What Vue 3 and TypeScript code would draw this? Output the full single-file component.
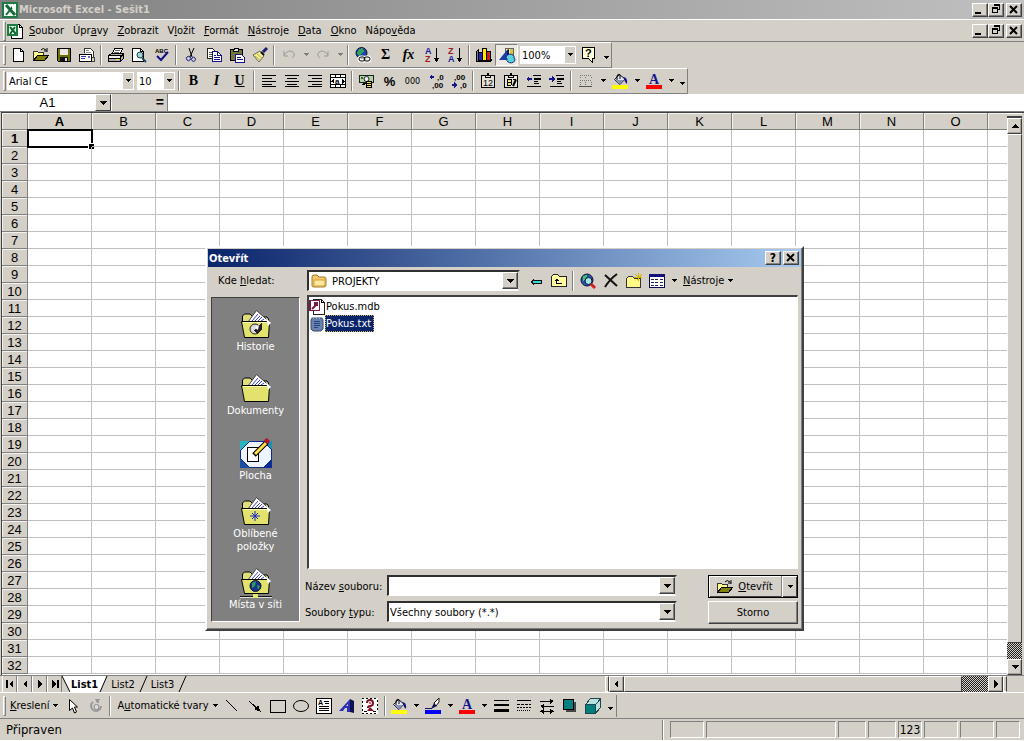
<script setup lang="ts">
import { h, ref } from 'vue'

interface Shape { d?: string; f?: string; s?: string; w?: number; t?: string; x?: number; y?: number; z?: number; b?: boolean; o?: boolean }
const K = '#000'
const p = (d: string, f = 'none', s = 'none', w = 1): Shape => ({ d, f, s, w })
const l = (d: string, s = K, w = 1): Shape => ({ d, f: 'none', s, w })
const t = (text: string, x: number, y: number, z: number, f = K, b = true): Shape => ({ t: text, x, y, z, f, b })
const soft = (s: Shape): Shape => ({ ...s, o: true })

const bucket: Shape[] = [
  soft(p('M7.5 1.5L13 6L8 11.5L2.5 6.5z', '#dfe6f5', '#111')), soft(p('M4 7H12L8 11z', '#8a93b5')),
  soft(l('M5 7V3Q6 0 8 2V6')), soft(p('M11 4Q16 4 15 11Q13 10 12 6z', '#16167e')),
]
const folderBig: Shape[] = [
  soft(p('M2.5 15V8L4.5 6H10L13 9H27L28.5 11V15z', '#dede7a', K)),
  soft(p('M8 14L16.5 2.5L29 13.5z', '#fff', '#444')),
  soft(l('M12 13L18 6M15 13L20 8M18 13L22 9M21 13L24 11', '#4040d0')),
  soft(p('M1.5 13.500H29.500L28.500 29.500H4.500z', '#e2e26c', K)),
  soft(l('M3 14.500H28', '#ffffb4')), soft(p('M26 10L31 15L28 18z', '#fff')),
]
const icons: Record<string, Shape[]> = {
  excel: [p('M0 0H16V16H0z', '#1f7a46'), p('M2 2H14V14H2z', '#f1fff4'), soft(l('M4 3L13 13', '#16683a', 3)), soft(l('M12 3L4 13', '#16683a', 2)), p('M10 3H13V6H10z', '#fff')],
  book: [p('M4.5 1.5H12.5L15.5 4.5V15.5H4.5z', '#fff', K), l('M12.5 1.5V4.5H15.5'), p('M0 1H11V13H0z', '#1c7d3f'), p('M2 3H9V11H2z', '#efffef'), soft(l('M3 4L9 11M8 4L3 11', '#0e6b30', 2))],
  new: [p('M3.5 1.5H10.5L13.5 4.5V14.5H3.5z', '#fff', K), l('M10.5 1.5V4.5H13.5')],
  open: [p('M.5 13.5V4.5H4.5L5.5 5.5H10.5V8.5', '#ffff94', '#333'), p('M.5 13.5L4.5 8.5H15.5L11.5 13.5z', '#808000', K), soft(l('M8 3Q10 0 13 3M14 1V5M14 4H11'))],
  save: [p('M1.5 1.5H14.5V14.5H2.5L1.5 13.5z', '#707000', K), p('M4 2H12V8H4z', '#e8e8e8'), p('M4 10H12V14H4z', '#111'), p('M9 11H11V14H9z', '#ddd')],
  mail: [p('M5.5 6V1.5H11.5L14.5 4.5V10', '#fff', '#333'), l('M7 3.5H10M7 5.5H12M7 7.5H12', '#888'), p('M.5 7.5H12.5V14.5H.5z', '#fff', K), l('M2 9.5H7M2 11.5H6', '#33a'), p('M9 9H11V11H9z', '#66c'), l('M13 10.5H15.5V14.5H13', '#444')],
  print: [p('M4.5 6.5L6.5 1.5H14.5L12.5 6.5z', '#fff', K), l('M7 3.5H12M6 5.5H11', '#666'), p('M.5 8.5L3.5 6.5H15.5V11.5L12.5 14.5H.5z', '#aaa', K), p('M1 9H12V11H1z', '#eee'), l('M1 11.5H12.5M12.5 8V14M1 8.5H12M13 9.5L15 7.5'), p('M8 12H11V13H8z', '#ff0')],
  preview: [p('M1.5 1.5H9.5L12.5 4.5V14.5H1.5z', '#fff', K), l('M9.5 1.5V4.5H12'), soft(p('M6 8A3 3 0 1 0 12 8A3 3 0 1 0 6 8', '#9ed4da', '#244')), soft(l('M11 11L15 15', '#124a60', 2))],
  spell: [t('ABC', 1, 6, 6), soft(l('M3 9L7 13L14 5', '#10108a', 2))],
  cut: [soft(l('M6 1L9 10M11 1L7 10', K)), soft(l('M4 13A2 2 0 1 0 7 10A2 2 0 0 0 4 13M9 11A2 2 0 1 0 12 11A2 2 0 0 0 9 11', '#16168c'))],
  copy: [p('M1.5 1.5H6.5L9.5 4.5V11.5H1.5z', '#fff', '#222'), l('M3 5.5H7M3 7.5H8M3 9.5H8', '#555'), p('M6.5 4.5H11.5L15.5 8.5V14.5H6.5z', '#fff', '#16168c'), l('M11.5 5V8.5H15M8 8.5H10M8 10.5H14M8 12.5H14', '#16168c')],
  paste: [p('M1.5 2.5H13.5V13.5H1.5z', '#75753a', K), p('M5.5 1.5H9.5V4.5H4.5z', '#ddd', K), p('M6.5 7.5H12.5L15.5 10.5V15.5H6.5z', '#fff', '#16168c'), l('M8 10.5H12M8 12.5H14', '#16168c')],
  brush: [soft(p('M1 8L8 4L12 9L7 15z', '#f4ee8e', '#666')), soft(l('M3 9L8 13M5 7L10 11', '#b9ae55')), soft(l('M9 5L12 8', '#111', 2)), soft(l('M11 5L15 1', '#1c1c70', 3))],
  undo: [soft(l('M3 9H7M3 9V4M3 8Q8 2 12 5Q15 8 11 11', '#999'))],
  redo: [soft(l('M13 9H9M13 9V4M13 8Q8 2 4 5Q1 8 5 11', '#999'))],
  link: [soft(p('M1 6A5 5 0 1 0 12 6A5 5 0 1 0 1 6', '#2045a8', '#112')), p('M4 2L8 1L9 5L6 7L5 10L2 6z', '#30a060'), soft(l('M4 12A2 2 0 0 1 6 10H8A2 2 0 0 1 8 14H6A2 2 0 0 1 4 12M9 12A2 2 0 0 1 11 10H13A2 2 0 0 1 13 14H11A2 2 0 0 1 9 12', '#fff', 3)), soft(l('M4 12A2 2 0 0 1 6 10H8A2 2 0 0 1 8 14H6A2 2 0 0 1 4 12M9 12A2 2 0 0 1 11 10H13A2 2 0 0 1 13 14H11A2 2 0 0 1 9 12'))],
  az: [t('A', 1, 7, 9, '#1a1a90'), t('Z', 1, 15, 9, '#a01828'), l('M12.5 1V14'), p('M10 11H15L13 15H12z', K)],
  za: [t('Z', 1, 7, 9, '#a01828'), t('A', 1, 15, 9, '#1a1a90'), l('M12.5 1V14'), p('M10 11H15L13 15H12z', K)],
  chart: [p('M.5 4.5L2.5 2.5V12.5H15.5L14.5 14.5H.5z', '#777', K), p('M2.5 5.5H6.5V13.5H2.5z', '#2222c0', K), p('M6.5 1.5H10.5V13.5H6.5z', '#ffe800', K), p('M10.5 4.5H14.5V13.5H10.5z', '#c82020', K)],
  drawing: [p('M6.5 1.5H14.5V10.5H6.5z', '#d6c640', '#665'), p('M7 2H11V10H7z', '#f4f0a0'), soft(p('M0 13L8 3V13z', '#1d3ca4')), soft(p('M8 3L10 2V12L8 13z', '#0c1c66')), soft(p('M8 12A4 3 0 1 0 15 11A4 3 0 1 0 8 12', '#53d6dc', '#227'))],
  help: [p('M1.5 .5H13.5V11.5H11.5V15.5L7.5 11.5H1.5z', '#ffffd8', K), t('?', 4, 10, 11)],
  left: [l('M1 2.5H15M1 5.5H11M1 8.5H15M1 11.5H11M1 13.5H15')],
  center: [l('M1 2.5H15M3 5.5H13M1 8.5H15M3 11.5H13M1 13.5H15')],
  right: [l('M1 2.5H15M5 5.5H15M1 8.5H15M5 11.5H15M1 13.5H15')],
  merge: [p('M.5 1.5H15.5V14.5H.5z', '#fff', K), l('M1 4.5H15M1 11.5H15M5.5 1V5M10.5 1V5M5.5 11V15M10.5 11V15M1 8.5H4M12 8.5H15'), p('M1 8L4 6V11zM15 8L12 6V11z', K), t('a', 5, 11, 8)],
  money: [p('M.5 2.5H14.5V9.5H.5z', '#b6d2a2', '#122'), soft(p('M5 6A2 2 0 1 0 10 6A2 2 0 1 0 5 6', '#eef', '#222')), p('M7.5 8.5H12.5V14.5H7.5z', '#f0e060', K), l('M8 10.5H12M8 12.5H12M3.5 10.5H7M3 11.5H6'), p('M2 4H4V6H2z', '#356a30')],
  incdec: [t(',0', 9, 7, 8), t(',00', 4, 15, 8), p('M1 4L4 1V3H6V5H4V7z', '#16168c')],
  decdec: [t(',00', 3, 7, 8), t(',0', 9, 15, 8), p('M6 12L3 9V11H1V13H3V15z', '#16168c')],
  cal: [p('M1.5 2.5H14.5V14.5H1.5z', '#e5e1d8', K), p('M5.5 4.5V2.5H7.5V.5H8.5V2.5H10.5V4.5z', '#ddd', K), t('12', 3, 13, 9, K, false)],
  calfx: [p('M1.5 2.5H14.5V14.5H1.5z', '#e5e1d8', K), p('M5.5 4.5V2.5H7.5V.5H8.5V2.5H10.5V4.5z', '#ddd', K), p('M4 6H8V12H4z', '#e9e36b'), l('M4 6.5H8M4 9.5H8M4 12.5H8M4.5 6V12M8.5 6V12M10 6.5H13'), soft(l('M13 6.5L10 13', K, 2))],
  outdent: [l('M7 2.5H15M1 13.5H15M8 10.5H13'), p('M8 5H15V7H8zM8 8H12V9H8z', K), p('M0 6L3 3V5H6V7H3V9z', '#16168c')],
  indent: [l('M7 2.5H15M1 13.5H15M8 10.5H13'), p('M8 5H15V7H8zM8 8H12V9H8z', K), p('M6 6L3 3V5H0V7H3V9z', '#16168c')],
  border: [p('M2 2H3V3H2zM4 2H5V3H4zM6 2H7V3H6zM8 2H9V3H8zM10 2H11V3H10zM12 2H13V3H12zM2 7H3V8H2zM4 7H5V8H4zM6 7H7V8H6zM8 7H9V8H8zM10 7H11V8H10zM12 7H13V8H12zM2 4H3V5H2zM2 9H3V10H2zM2 11H3V12H2zM7 4H8V5H7zM7 9H8V10H7zM7 11H8V12H7zM13 4H14V5H13zM13 9H14V10H13zM13 11H14V12H13z', '#777'), l('M1 13.5H14', '#555')],
  fill: [...bucket, p('M0 12H16V16H0z', '#ff0')],
  pen: [p('M0 12H16V16H0z', '#00f'), soft(p('M6 11L9 5L12 8z', '#10105c')), soft(p('M9 5L14 0L14 4L11 8z', '#fff', '#111')), l('M0 10.5H7', '#10105c')],
  fontcolor: [{ ...t('A', 3, 11, 14, '#16168c'), o: true }, p('M0 12H16V16H0z', '#f00')],
  pointer: [soft(p('M4.5 1.5V12.5L7.5 10L9.5 15L11.500 14L9.5 9H12.5z', '#fff', K))],
  rotate: [soft(l('M5 4A5 5 0 1 0 13 8', '#999', 2)), p('M7 1H12L10 6z', '#999'), soft(p('M6 9A2 2 0 1 0 11 9A2 2 0 1 0 6 9', '#ddd', '#888'))],
  line: [l('M2.5 2.5L13.5 13.5')],
  arrow: [l('M2.5 3.5L12.5 12.5'), p('M14 14L7 11L11 7z', K)],
  rect: [l('M.5 2.5H15.5V14.5H.5z')],
  oval: [soft(l('M.5 8A7.500 5.500 0 1 0 15.500 8A7.500 5.500 0 1 0 .5 8'))],
  textbox: [p('M.5 .5H15.5V15.5H.5z', '#fff', K), l('M8 3.5H13M9 5.5H13M3 8.5H13M3 10.5H13M3 12.5H13'), t('A', 2, 7, 7)],
  wordart: [soft(p('M0 13L11 1V14H8V10H6L4 13z', '#2832b4')), soft(p('M11 1L15 3V15L11 14z', '#10104e')), soft(p('M7 8L9 6V8z', '#d4d0c8'))],
  clip: [p('M0 0H16V16H0z', '#fff'), p('M0 0H2V1H0zM4 0H6V1H4zM8 0H10V1H8zM12 0H14V1H12zM0 15H2V16H0zM4 15H6V16H4zM8 15H10V16H8zM12 15H14V16H12zM0 3H1V5H0zM0 7H1V9H0zM0 11H1V13H0zM15 2H16V4H15zM15 6H16V8H15zM15 10H16V12H15zM2 13H5V14H2zM11 13H14V14H11z', K), soft(l('M5 5Q5 2 8 2Q11 2 11 5Q11 8 8 8Q6 8 6 10', '#7c1424', 2)), p('M7 4H9V6H7z', '#e06070'), soft(p('M5 13L8 9L12 13z', '#7c1424'))],
  lines: [p('M1 2H16V3H1zM1 6H16V8H1zM1 11H16V14H1z', K)],
  dashes: [p('M1 2H15V3H1zM1 6H4V7H1zM5 6H8V7H5zM9 6H12V7H9zM13 6H15V7H13zM1 9H3V10H1zM4 9H6V10H4zM7 9H9V10H7zM10 9H12V10H10zM13 9H15V10H13zM1 12H2V13H1zM3 12H4V13H3zM5 12H6V13H5zM7 12H8V13H7zM9 12H10V13H9zM11 12H12V13H11zM13 12H14V13H13z', K)],
  arrows: [l('M1 3.5H13M3 8.5H15M1 13.5H15'), p('M15 3L11 1V6zM1 8L5 6V11zM15 13L11 11V16zM1 13L5 11V16z', K)],
  shadow: [p('M4 4H14V14H4z', '#444'), p('M1.5 1.5H11.5V11.5H1.5z', '#007f7f', K)],
  cube: [p('M.5 6.5L5.5 .5H15.5V9.5L10.5 15.5H.5z', '#b9e0e0', '#244'), p('M1 6H11V15H1z', '#007f7f'), l('M1 6.5H10.5V15M10.5 6.5L15.5 1', '#245')],
  folder: [soft(p('M1 13V4Q1 2 3 2H6L8 4H13Q15 4 15 6V12Q15 14 13 14H3Q1 14 1 13', '#f0c868', '#a87820')), soft(p('M3 7H14V11Q14 13 12 13H3z', '#ffe89c', '#d0a040'))],
  back: [p('M2 9L6 5V7H14V11H6V13z', '#111'), p('M4 9L6 7V8H13V10H6V11z', '#35dada')],
  up: [p('M.5 13.5V3.5L2.5 1.5H6.5L8.5 3.5H15.5V13.5z', '#fffd9e', '#222'), l('M5.5 6V10.5H11'), p('M3 8L6 5L8 8z', K)],
  web: [soft(p('M1 7A6 6 0 1 0 13 7A6 6 0 1 0 1 7', '#2a55b8', '#113')), p('M3 3L7 2L6 6L3 8z', '#3fc36b'), soft(p('M5 8A3 3 0 1 0 12 8A3 3 0 1 0 5 8', '#a0e8ee', '#112')), soft(l('M11 11L15 15', '#d42020', 3))],
  del: [soft(l('M2 2L14 13', '#111', 2)), soft(l('M14 1Q7 6 2 14', '#111', 2))],
  newfolder: [p('M.5 14.5V5.5L2.5 3.5H6.5L8.5 5.5H14.5V14.5z', '#fffb86', '#333'), l('M9 1L13 5M16 1L11 7M12.5 0V8M8 4.5H16', '#d4b800')],
  views: [p('M.5 1.5H15.5V14.5H.5z', '#fff', '#0a0a50'), p('M0 1H16V4H0z', '#12127e'), p('M2 6H5V7H2zM6 6H9V7H6zM11 6H14V7H11zM2 9H5V10H2zM6 9H9V10H6zM11 9H14V10H11zM2 12H5V13H2zM6 12H9V13H6zM11 12H14V13H11z', '#225')],
  mdb: [p('M4.500 .5H12.500L15.500 3.500V15.500H4.500z', '#fff', '#222'), l('M12.500 1V3.500H15'), p('M.5 1.500H10.500V11.500H.5z', '#fff', '#7a1c40'), l('M1.500 2V11M1 11.500H10', '#7a1c40'), soft(l('M3 10L7 6', '#7a1c40', 2)), soft(l('M6 4H8V6H6z', '#7a1c40', 2))],
  txt: [soft(p('M3 2H13L14 4V13L12 15H4L2 13V4z', '#6a82b0', '#3a4a70')), l('M5 5.500H11M5 7.500H11M5 9.500H11M5 11.500H9', '#24427c'), p('M4 1H5V3H4zM7 1H8V3H7zM10 1H11V3H10z', '#a0b0cc')],
  tri: [p('M5 6H11L8 9z', K)],
  min: [p('M3 10H9V12H3z', K)],
  restore: [p('M6 2H12V8H10V6H9V4H6z', K), p('M7 4H11V7H10V5H7z', '#d4d0c8'), p('M4 5H10V11H4z', K), p('M5 7H9V10H5z', '#d4d0c8')],
  close: [soft(l('M4 4L11 11M11 4L4 11', K, 2))],
  aleft: [p('M10 4V12L6 8z', K)],
  aright: [p('M6 4V12L10 8z', K)],
  aup: [p('M4 10H12L8 6z', K)],
  adown: [p('M4 6H12L8 10z', K)],
  afirst: [p('M11 4V12L7 8zM4 4H6V12H4z', K)],
  alast: [p('M5 4V12L9 8zM10 4H12V12H10z', K)],
  historie: [...folderBig, soft(p('M10 21A5 5 0 1 0 20 21A5 5 0 1 0 10 21', '#ddd', '#222')), p('M14 22L22 15V21L17 26z', '#222'), soft(p('M15 20L19 17L18 22z', '#fff'))],
  dokumenty: folderBig,
  plocha: [p('M0 4H32V31H0z', '#0c2b96'), p('M0 4H9L0 13z', '#25b7c0'), p('M23 4H32V13z', '#1f8fb4'), p('M0 22L9 31H0z', '#1b50a0'), p('M9 5H23L31 13V22L23 30H9L1 22V13z', '#eef4ff'), p('M7.500 10.500H18.500V24.500H7.500z', '#fff', K), soft(l('M14 18L27 5', K, 5)), soft(l('M15 17L26 6', '#ffe04a', 3)), soft(p('M25 2L27 1L30 4L29 6L27 7L24 4z', '#b0182c'))],
  oblibene: [...folderBig, soft(l('M15 16V26M10 21H20M12 18L18 24M18 18L12 24', '#1a28c8'))],
  sit: [...folderBig.slice(0, 3), soft(p('M1.5 13.500H29.500L28.500 27.500H4.500z', '#e2e26c', K)), soft(p('M26 10L31 15L28 18z', '#fff')), soft(p('M10 20A5 5 0 1 0 21 20A5 5 0 1 0 10 20', '#16348c', '#113')), soft(p('M12 17L16 15L15 20L12 22zM17 19L20 20L18 24z', '#2f9c5c')), l('M0 30.500H32', '#111'), l('M0 31.500H32', '#ddd'), p('M13 28H18V32H13z', '#e6e66c')],
}

const Ico = (props: { name: string; size?: number }) => {
  const n = props.size || 16
  return h('svg', { width: n, height: n, viewBox: `0 0 ${n} ${n}`, 'aria-hidden': 'true' },
    icons[props.name].map((s) => s.t
      ? h('text', { x: s.x, y: s.y, 'font-size': s.z, fill: s.f, 'font-weight': s.b ? 700 : 400, 'font-family': s.o ? 'Liberation Serif, serif' : 'Liberation Sans, sans-serif' }, s.t)
      : h('path', { d: s.d, fill: s.f, stroke: s.s, 'stroke-width': s.w, 'shape-rendering': s.o ? 'auto' : 'crispEdges' })))
}
Ico.props = ['name', 'size']

// An underscore marks the letter that follows as the access key.
const Key = (props: { text: string }) => {
  const [a, b = ''] = props.text.split('_')
  return h('span', b ? [a, h('u', b[0]), b.slice(1)] : a)
}
Key.props = ['text']

interface Tool { k: 'icon' | 'text' | 'sep' | 'drop' | 'select' | 'more' | 'menu'; n?: string; title?: string; cls?: string }
const i = (n: string, title: string, cls = ''): Tool => ({ k: 'icon', n, title, cls })
const x = (n: string, title: string, cls: string): Tool => ({ k: 'text', n, title, cls })
const sep: Tool = { k: 'sep' }
const drop = (title: string, cls = ''): Tool => ({ k: 'drop', title, cls })
const more: Tool = { k: 'more', title: 'Další tlačítka' }

const menu = ['_Soubor', 'Úpr_avy', '_Zobrazit', 'V_ložit', '_Formát', '_Nástroje', '_Data', '_Okno', 'Nápo_věda']
const bars: Tool[][] = [
  [i('new', 'Nový'), i('open', 'Otevřít'), i('save', 'Uložit'), i('mail', 'Pošta'), sep, i('print', 'Tisk'), i('preview', 'Náhled'), i('spell', 'Pravopis'), sep,
    i('cut', 'Vyjmout'), i('copy', 'Kopírovat'), i('paste', 'Vložit'), i('brush', 'Kopírovat formát'), sep, i('undo', 'Zpět'), drop('Zpět', 'dim'), i('redo', 'Znovu'), drop('Znovu', 'dim'), sep,
    i('link', 'Hypertextový odkaz'), x('Σ', 'AutoSum', 'serif'), x('fx', 'Vložit funkci', 'serif ital'), i('az', 'Seřadit vzestupně'), i('za', 'Seřadit sestupně'), sep,
    i('chart', 'Průvodce grafem'), i('drawing', 'Kreslení', 'pressed'), { k: 'select', n: '100%', title: 'Lupa', cls: 'w-zoom' }, i('help', 'Nápověda'), more],
  [{ k: 'select', n: 'Arial CE', title: 'Písmo', cls: 'w-font' }, { k: 'select', n: '10', title: 'Velikost písma', cls: 'w-size' }, sep,
    x('B', 'Tučné', 'serif'), x('I', 'Kurzíva', 'serif ital'), x('U', 'Podtržené', 'serif under'), sep,
    i('left', 'Vlevo'), i('center', 'Na střed'), i('right', 'Vpravo'), i('merge', 'Sloučit'), sep,
    i('money', 'Měna'), x('%', 'Procenta', 'pct'), x('000', 'Oddělovač tisíců', 'thou'), i('incdec', 'Přidat desetinné místo'), i('decdec', 'Odebrat desetinné místo'), sep,
    i('cal', 'Datum'), i('calfx', 'Vzorec'), i('outdent', 'Zmenšit odsazení'), i('indent', 'Zvětšit odsazení'), sep,
    i('border', 'Ohraničení'), drop('Ohraničení'), i('fill', 'Barva výplně'), drop('Barva výplně'), i('fontcolor', 'Barva písma'), drop('Barva písma'), more],
]
const drawBar: Tool[] = [
  { k: 'menu', n: '_Kreslení' }, i('pointer', 'Vybrat objekty'), i('rotate', 'Otočit'), sep, { k: 'menu', n: 'A_utomatické tvary' },
  i('line', 'Čára'), i('arrow', 'Šipka'), i('rect', 'Obdélník'), i('oval', 'Elipsa'), i('textbox', 'Textové pole'), i('wordart', 'WordArt'), i('clip', 'Klipart'), sep,
  i('fill', 'Barva výplně'), drop('Barva výplně'), i('pen', 'Barva čáry'), drop('Barva čáry'), i('fontcolor', 'Barva písma'), drop('Barva písma'),
  i('lines', 'Styl čáry'), i('dashes', 'Styl přerušované čáry'), i('arrows', 'Styl šipky'), i('shadow', 'Stín'), i('cube', 'Prostorový'), more,
]
const allBars = [{ cls: 'std', items: bars[0] }, { cls: 'fmt', items: bars[1] }]
const columns = [...'ABCDEFGHIJKLMNO', '']
const places = [['historie', 'Historie'], ['dokumenty', 'Dokumenty'], ['plocha', 'Plocha'], ['oblibene', 'Oblíbené položky'], ['sit', 'Místa v síti']]
const files = [{ icon: 'mdb', name: 'Pokus.mdb' }, { icon: 'txt', name: 'Pokus.txt' }]
const selected = ref('Pokus.txt')
const fileName = ref('')
const panes = ['p1', 'p2', 'p3', 'p3', 'num', 'p4', 'p4', 'p5']
</script>

<template>
  <div class="app">
    <header class="title">
      <Ico name="excel" /><h1>Microsoft Excel - Sešit1</h1>
      <div class="wbtns">
        <button class="wb" aria-label="Minimalizovat"><Ico name="min" /></button>
        <button class="wb" aria-label="Obnovit"><Ico name="restore" /></button>
        <button class="wb last" aria-label="Zavřít"><Ico name="close" /></button>
      </div>
    </header>
    <nav class="menu">
      <span class="grip"></span><Ico name="book" class="doc" />
      <button v-for="m in menu" :key="m" class="mi"><Key :text="m" /></button>
      <div class="wbtns">
        <button class="wb" aria-label="Minimalizovat sešit"><Ico name="min" /></button>
        <button class="wb" aria-label="Obnovit sešit"><Ico name="restore" /></button>
        <button class="wb last" aria-label="Zavřít sešit"><Ico name="close" /></button>
      </div>
    </nav>

    <div v-for="bar in allBars" :key="bar.cls" class="bar" :class="bar.cls" role="toolbar">
      <span class="grip"></span>
      <template v-for="(b, n) in bar.items" :key="n">
        <span v-if="b.k === 'sep'" class="sep"></span>
        <button v-else-if="b.k === 'icon'" class="tb" :class="b.cls" :aria-label="b.title"><Ico :name="b.n!" /></button>
        <button v-else-if="b.k === 'text'" class="tb" :class="b.cls" :aria-label="b.title">{{ b.n }}</button>
        <span v-else-if="b.k === 'select'" class="tsel" :class="b.cls">
          <select :aria-label="b.title"><option>{{ b.n }}</option></select><span class="tarrow"><Ico name="tri" /></span>
        </span>
        <button v-else class="drop" :class="[b.cls, { more: b.k === 'more' }]" :aria-label="b.title"><Ico name="tri" /></button>
      </template>
    </div>

    <div class="formula">
      <input class="name" aria-label="Pole názvů" value="A1" />
      <button class="nbtn" aria-label="Názvy"><Ico name="adown" /></button>
      <button class="eq" aria-label="Upravit vzorec">=</button>
      <input class="fx" aria-label="Řádek vzorců" />
    </div>

    <main class="work">
      <div class="sheet">
        <table>
          <thead>
            <tr><th class="rh"></th><th v-for="(c, n) in columns" :key="n" :class="{ on: n === 0 }">{{ c }}</th></tr>
          </thead>
          <tbody>
            <tr v-for="r in 32" :key="r">
              <th class="rh" :class="{ on: r === 1 }">{{ r }}</th>
              <td v-for="(c, n) in columns" :key="n"><span v-if="r === 1 && n === 0" class="cursor"></span></td>
            </tr>
          </tbody>
        </table>
      </div>
      <div class="vscroll">
        <span class="vsplit"></span>
        <button class="sb" aria-label="Nahoru"><Ico name="aup" /></button>
        <span class="thumb"></span><span class="dither vd"></span>
        <button class="sb" aria-label="Dolů"><Ico name="adown" /></button>
      </div>
    </main>

    <div class="tabs">
      <button v-for="a in ['afirst', 'aleft', 'aright', 'alast']" :key="a" class="nav" :aria-label="a"><Ico :name="a" /></button>
      <svg width="8" height="16" viewBox="0 0 8 16"><path d="M0 0H8V16z" fill="#fff" /><path d="M0 0L8 16" stroke="#000" /></svg>
      <button class="tab on">List1</button>
      <svg width="8" height="16" viewBox="0 0 8 16"><path d="M0 0H8L1 16H0z" fill="#fff" /><path d="M8 0L1 16" stroke="#000" /></svg>
      <button class="tab">List2</button>
      <svg width="8" height="16" viewBox="0 0 8 16"><path d="M8 0L1 16" stroke="#000" /></svg>
      <button class="tab">List3</button>
      <svg width="8" height="16" viewBox="0 0 8 16"><path d="M8 0L1 16" stroke="#000" /></svg>
      <div class="hscroll">
        <span class="hsplit"></span>
        <button class="sb" aria-label="Vlevo"><Ico name="aleft" /></button>
        <span class="thumb"></span><span class="dither hd"></span>
        <button class="sb" aria-label="Vpravo"><Ico name="aright" /></button>
        <span class="hsplit"></span><span class="corner"></span>
      </div>
    </div>

    <div class="bar draw" role="toolbar">
      <span class="grip"></span>
      <template v-for="(b, n) in drawBar" :key="n">
        <span v-if="b.k === 'sep'" class="sep"></span>
        <button v-else-if="b.k === 'icon'" class="tb" :aria-label="b.title"><Ico :name="b.n!" /></button>
        <button v-else-if="b.k === 'menu'" class="tmenu"><Key :text="b.n!" /><Ico name="tri" /></button>
        <button v-else class="drop" :class="{ more: b.k === 'more' }" :aria-label="b.title"><Ico name="tri" /></button>
      </template>
    </div>

    <footer class="status">
      <span class="ready">Připraven</span>
      <span class="ssep"></span>
      <span v-for="(c, n) in panes" :key="n" class="pane" :class="c">{{ c === 'num' ? '123' : '' }}</span>
    </footer>

    <section class="dialog" role="dialog" aria-label="Otevřít">
      <div class="dtitle">
        <h2>Otevřít</h2>
        <div class="wbtns">
          <button class="wb" aria-label="Nápověda">?</button>
          <button class="wb last" aria-label="Zavřít dialog"><Ico name="close" /></button>
        </div>
      </div>
      <div class="look">
        <label for="look"><Key text="Kde _hledat:" /></label>
        <span class="combo lookin">
          <Ico name="folder" class="fold" />
          <select id="look"><option>PROJEKTY</option></select><span class="carrow"><Ico name="adown" /></span>
        </span>
        <button class="tb first" aria-label="Zpět"><Ico name="back" /></button>
        <button class="tb" aria-label="O úroveň výš"><Ico name="up" /></button>
        <span class="sep"></span>
        <button class="tb" aria-label="Hledat na webu"><Ico name="web" /></button>
        <button class="tb" aria-label="Odstranit"><Ico name="del" /></button>
        <button class="tb" aria-label="Nová složka"><Ico name="newfolder" /></button>
        <button class="tb" aria-label="Zobrazení"><Ico name="views" /></button>
        <button class="drop" aria-label="Typ zobrazení"><Ico name="tri" /></button>
        <button class="tmenu"><Key text="_Nástroje" /><Ico name="tri" /></button>
      </div>
      <div class="dbody">
        <div class="places">
          <button v-for="[ic, label] in places" :key="ic" class="place"><Ico :name="ic" :size="32" /><span>{{ label }}</span></button>
        </div>
        <div class="dmain">
          <div class="list" role="listbox" aria-label="Soubory">
            <div v-for="f in files" :key="f.name" class="file" role="option" :aria-selected="selected === f.name" @click="selected = f.name">
              <Ico :name="f.icon" /><span :class="{ sel: selected === f.name }">{{ f.name }}</span>
            </div>
          </div>
          <div class="form">
            <label for="fname"><Key text="Název _souboru:" /></label>
            <span class="combo"><input id="fname" v-model="fileName" /><span class="carrow"><Ico name="adown" /></span></span>
            <div class="btn default">
              <button class="main"><Ico name="open" /><Key text="_Otevřít" /></button>
              <button class="side" aria-label="Další možnosti"><Ico name="tri" /></button>
            </div>
            <label for="ftype"><Key text="Soubory _typu:" /></label>
            <span class="combo"><select id="ftype"><option>Všechny soubory (*.*)</option></select><span class="carrow"><Ico name="adown" /></span></span>
            <button class="btn cancel">Storno</button>
          </div>
        </div>
      </div>
    </section>
  </div>
</template>

<style>
body { margin: 0; background: #d4d0c8; }
</style>

<style scoped>
.app { position: relative; display: flex; flex-direction: column; min-height: 100vh; overflow: hidden; background: #d4d0c8; color: #000; font: 11px/13px "DejaVu Sans Condensed", "DejaVu Sans", sans-serif; }
.app * { box-sizing: border-box; }
.app :deep(svg) { display: block; flex: none; overflow: visible; }
button, input, select { font: inherit; color: inherit; margin: 0; padding: 0; border: 0; border-radius: 0; background: none; outline: 0; appearance: none; }
button { display: flex; align-items: center; justify-content: center; flex: none; white-space: nowrap; }
h1, h2 { margin: 0; font-size: 11px; line-height: 13px; font-weight: 700; }

.title { display: flex; align-items: center; height: 19px; padding: 0 2px; background: linear-gradient(90deg, #808080, #c0c0c0); color: #d4d0c8; }
.title h1 { margin-left: 1px; }
.wbtns { display: flex; margin-left: auto; }
.wb { width: 16px; height: 14px; overflow: hidden; background: #d4d0c8; color: #000; border: 1px solid; border-color: #fff #404040 #404040 #fff; box-shadow: inset -1px -1px #808080; font-weight: 700; font-size: 12px; line-height: 12px; }
.wb.last { margin-left: 2px; }
.menu { display: flex; align-items: center; height: 23px; padding-right: 2px; border-top: 1px solid #fff; border-bottom: 1px solid #808080; }
.grip { flex: none; width: 3px; height: 20px; margin: 0 0 0 3px; border: 1px solid; border-color: #fff #808080 #808080 #fff; }
.doc { margin: 0 2px 0 1px; }
.mi { height: 19px; margin-right: 1px; padding: 0 4px; }

.bar { display: flex; align-items: center; align-self: flex-start; height: 26px; border-top: 1px solid #fff; border-bottom: 1px solid #808080; border-right: 1px solid #808080; }
.tb { width: 23px; height: 22px; }
.sep { flex: none; width: 2px; height: 20px; margin: 0 2px; border-left: 1px solid #808080; border-right: 1px solid #fff; }
.drop { width: 11px; height: 22px; overflow: hidden; }
.drop.dim { opacity: .4; }
.drop.more { align-items: flex-end; }
.pressed { border: 1px solid; border-color: #808080 #fff #fff #808080; background: #ece9e2; }
.serif { font: 700 14px "Liberation Serif", serif; }
.ital { font-style: italic; }
.under { text-decoration: underline; }
.pct { font: 700 13px "Liberation Sans", sans-serif; }
.thou { font-size: 9px; }
.tsel { position: relative; flex: none; height: 18px; margin: 0 1px 0 2px; background: #fff; }
.tsel select { width: 100%; height: 18px; padding-left: 2px; }
.tarrow { position: absolute; right: 1px; top: 1px; width: 10px; height: 16px; display: flex; justify-content: center; overflow: hidden; background: #d4d0c8; pointer-events: none; }
.w-zoom { width: 56px; }
.w-font { width: 127px; margin-left: 1px; }
.w-size { width: 38px; }

.formula { display: flex; height: 18px; background: #fff; border-bottom: 1px solid #808080; font-family: "Liberation Sans", sans-serif; }
.name { width: 95px; text-align: center; font-size: 13px; background: #fff; }
.nbtn { width: 16px; overflow: hidden; background: #d4d0c8; border: 1px solid; border-color: #fff #404040 #404040 #fff; }
.eq { width: 57px; background: #d4d0c8; border-left: 1px solid #fff; border-right: 1px solid #808080; justify-content: flex-end; padding-right: 3px; font-size: 14px; font-weight: 700; }
.fx { flex: 1; min-width: 0; }

.work { display: flex; flex: 1; margin-left: 1px; border-top: 1px solid #404040; border-left: 1px solid #404040; }
.sheet { flex: 1; min-width: 0; overflow: hidden; background: #fff; contain: inline-size; }
table { width: 1050px; table-layout: fixed; border-collapse: separate; border-spacing: 0; font: 13px/14px "Liberation Sans", sans-serif; }
th, td { height: 17px; padding: 0; width: 64px; }
td { position: relative; border-right: 1px solid #c0c0c0; border-bottom: 1px solid #c0c0c0; }
th { padding-top: 1px; font-weight: 400; background: #d4d0c8; border-right: 1px solid #808080; border-bottom: 1px solid #808080; box-shadow: inset 1px 1px #f4f2ee; }
th.rh { width: 26px; }
th.on { font-weight: 700; }
.cursor { position: absolute; inset: -1px -2px -2px -1px; border: 2px solid #000; }
.cursor::after { content: ""; position: absolute; right: -3px; bottom: -3px; width: 5px; height: 5px; background: #000; border: solid #fff; border-width: 1px 0 0 1px; }
.vscroll { display: flex; flex-direction: column; flex: none; width: 17px; padding: 0 2px 0 0; }
.vsplit { height: 5px; border-bottom: 2px solid #404040; border-top: 1px solid #fff; }
.sb { width: 15px; height: 16px; overflow: hidden; background: #d4d0c8; border: 1px solid; border-color: #fff #404040 #404040 #fff; box-shadow: inset -1px -1px #a8a49c; }
.thumb { flex: 1; background: #d4d0c8; border: 1px solid; border-color: #fff #404040 #404040 #fff; }
.dither { background: repeating-conic-gradient(#202020 0 25%, #d4d0c8 0 50%) 0 0 / 2px 2px; }
.vd { height: 16px; }

.tabs { display: flex; height: 17px; border-top: 1px solid #808080; padding-left: 2px; }
.nav { width: 15px; height: 16px; overflow: hidden; border-right: 1px solid #808080; border-left: 1px solid #fff; }
.tab { height: 16px; padding: 0 4px; }
.tab.on { background: #fff; font-weight: 700; padding: 0 1px; }
.hscroll { display: flex; width: 41%; margin-left: auto; padding-right: 2px; }
.hsplit { width: 4px; border: 1px solid; border-color: #fff #404040 #fff #fff; background: #d4d0c8; }
.hd { width: 26px; }
.corner { width: 15px; }

.draw { align-self: stretch; height: 27px; border-right: 0; }
.draw .drop.more { width: 12px; border-right: 1px solid #808080; }
.tmenu { height: 22px; padding-left: 4px; }
.tmenu svg { margin: 0 -2px; }

.status { display: flex; align-items: center; height: 22px; padding: 0 4px 0 6px; border-bottom: 1px solid #fff; }
.ready { flex: 1; font-size: 13px; }
.ssep { width: 2px; height: 20px; margin-right: 6px; border-left: 1px solid #808080; border-right: 1px solid #fff; }
.pane { height: 17px; margin-right: 2px; border: 1px solid; border-color: #808080 #fff #fff #808080; text-align: center; font-size: 13px; line-height: 16px; }
.pane:last-child { margin-right: 0; }
.p1 { width: 34px; }
.p2 { width: 130px; }
.p3 { width: 28px; }
.num { width: 24px; font-size: 12px; }
.p4 { width: 34px; }
.p5 { width: 24px; }

.dialog { position: absolute; left: 205px; top: 246px; width: 599px; padding: 1px 1px 5px; background: #d4d0c8; border: 2px solid; border-color: #fff #404040 #404040 #fff; outline: 0; box-shadow: inset -1px -1px #808080; }
.dtitle { display: flex; align-items: center; height: 18px; padding: 0 2px 0 1px; background: linear-gradient(90deg, #0a246a, #a6caf0); color: #fff; }
.look { display: flex; align-items: center; height: 21px; margin: 3px 0 4px 10px; }
.look label { width: 89px; }
.look .first { margin-left: 4px; }
.combo { position: relative; display: block; height: 21px; background: #fff; border: 2px solid; border-color: #303030 #d4d0c8 #d4d0c8 #303030; border-bottom: 1px solid #fff; }
.combo select, .combo input { width: 100%; height: 18px; padding-left: 1px; display: block; }
.lookin { flex: none; width: 213px; }
.lookin select { padding-left: 23px; }
.fold { position: absolute; left: 2px; top: 1px; }
.carrow { position: absolute; right: 0; top: 0; width: 16px; height: 17px; display: flex; align-items: center; justify-content: center; overflow: hidden; background: #d4d0c8; border: 1px solid; border-color: #fff #404040 #404040 #fff; box-shadow: inset -1px -1px #808080; pointer-events: none; }
.dbody { display: flex; padding: 0 3px; }
.places { display: flex; flex-direction: column; flex: none; width: 89px; height: 325px; margin: 2px 5px 0 0; background: #808080; border: 1px solid; border-color: #404040 #fff #fff #404040; color: #fff; }
.place { flex: 1; flex-direction: column; white-space: normal; }
.place span { max-width: 60px; text-align: center; }
.dmain { flex: 1; min-width: 0; }
.list { height: 274px; margin-left: 2px; padding: 1px 0 0; background: #fff; border: 2px solid; border-color: #404040 #fff #fff #404040; border-width: 2px 1px 1px 2px; }
.file { display: flex; align-items: center; height: 17px; }
.file span { height: 17px; line-height: 17px; padding: 0 3px 0 1px; white-space: nowrap; }
.file .sel { background: #0a246a; color: #fff; outline: 1px dotted #d4b060; outline-offset: -1px; }
.form { display: grid; grid-template-columns: 82px 290px 1fr; grid-auto-rows: 23px; row-gap: 3px; margin-top: 6px; }
.form label { line-height: 23px; white-space: nowrap; }
.btn { width: 90px; height: 23px; justify-self: end; border: 1px solid; border-color: #fff #404040 #404040 #fff; box-shadow: inset -1px -1px #808080; }
.default { display: flex; border: 1px solid #000; box-shadow: inset 1px 1px #fff, inset -1px -1px #404040; }
.main { flex: 1; gap: 5px; }
.side { width: 16px; overflow: hidden; border-left: 1px solid #808080; box-shadow: inset 1px 0 #fff; }
</style>
